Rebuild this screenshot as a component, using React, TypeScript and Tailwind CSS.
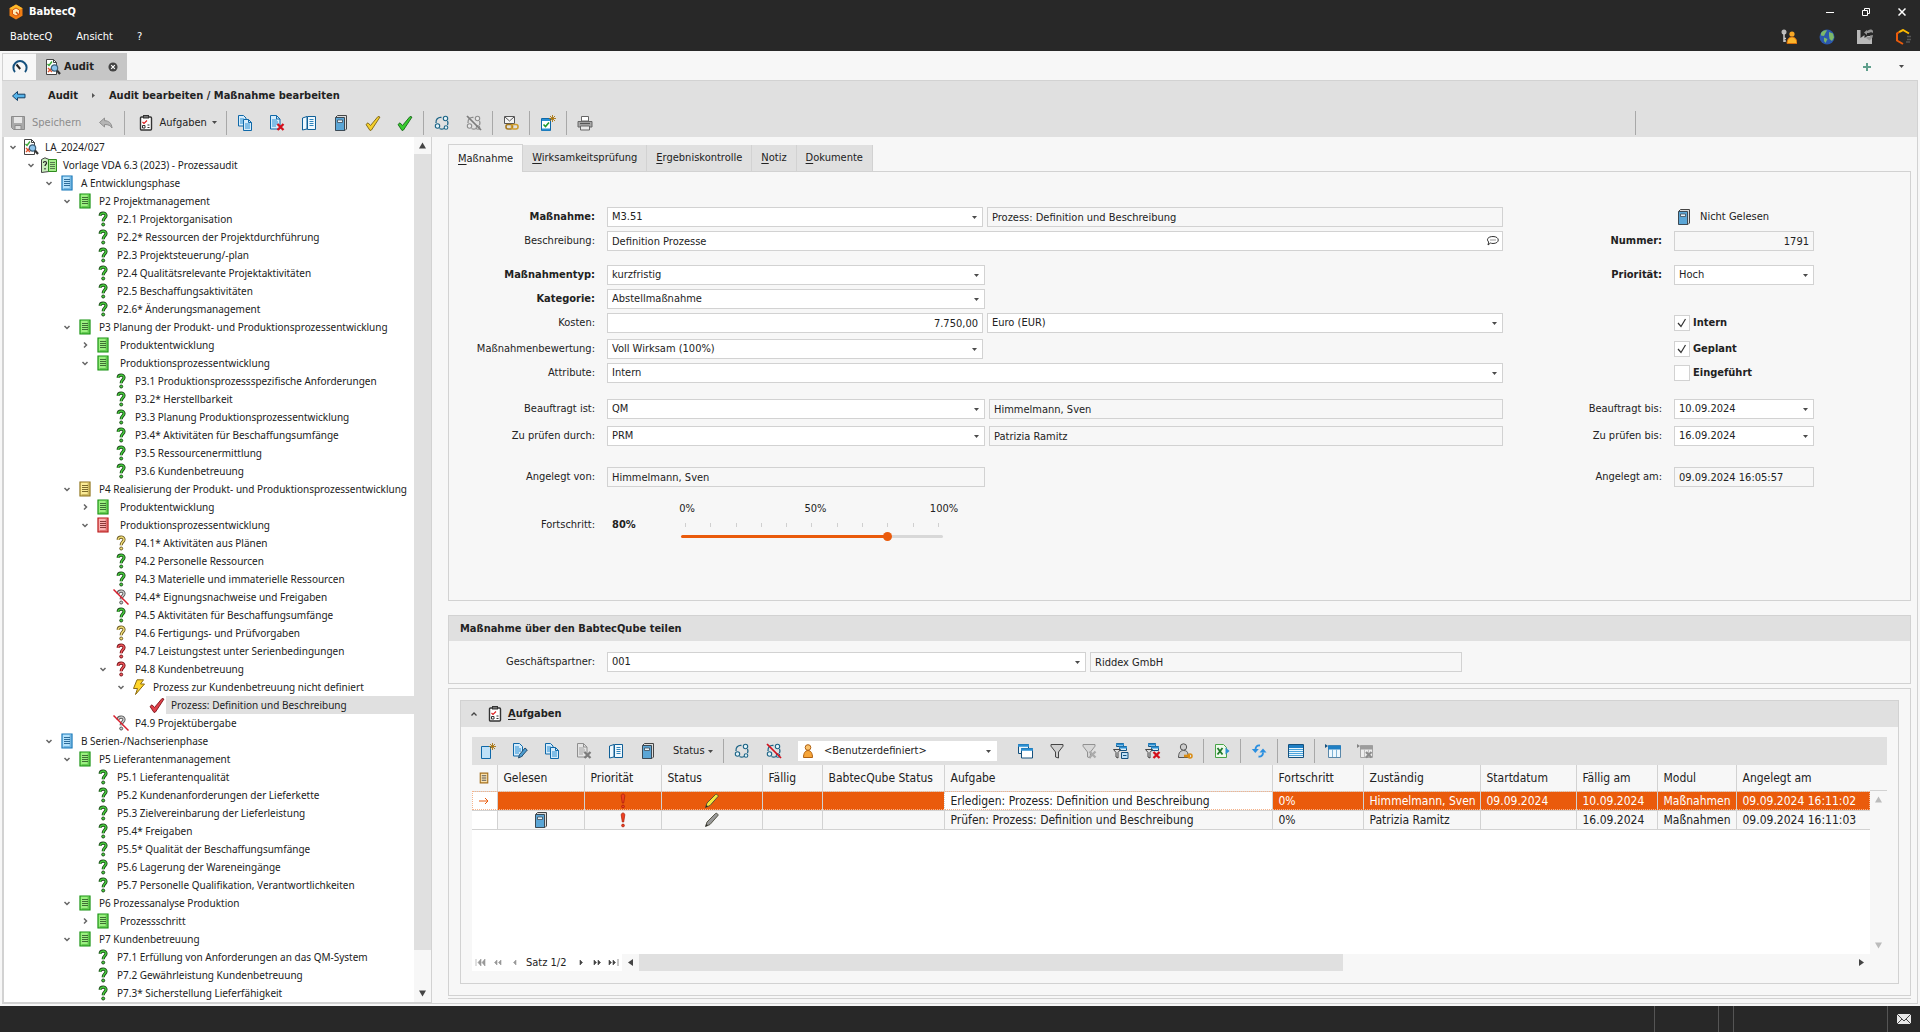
import { ReactNode, useState } from "react";

type IconProps = { className?: string };

function Svg({ children, className = "" }: { children: ReactNode; className?: string }) {
  return (
    <svg viewBox="0 0 16 16" className={`size-4 shrink-0 ${className}`} fill="none" aria-hidden="true">
      {children}
    </svg>
  );
}

function Caret({ className = "" }: IconProps) {
  return (
    <svg viewBox="0 0 5 3" className={`h-[3px] w-[5px] shrink-0 ${className}`} aria-hidden="true">
      <path d="M0 0h5L2.5 3z" fill="#4a4a4a" />
    </svg>
  );
}

function AuditIcon() {
  return (
    <Svg>
      <path d="M1.5.5h7l3 3v12h-10z" fill="#fff" stroke="#444" />
      <path d="M8.5.5v3h3" stroke="#444" />
      <path d="M2.500 5l1.500 1.500L7 2.500" stroke="#3aa935" strokeWidth="1.400" />
      <path d="M3 9l4 4M7 9l-4 4" stroke="#e0522d" strokeWidth="1.400" />
      <circle cx="9.500" cy="9" r="3.200" fill="#8cc4ec" stroke="#3d5f78" strokeWidth="1.200" />
      <path d="M12 11.500l3 3.500" stroke="#333" strokeWidth="2.200" />
    </Svg>
  );
}

function GaugeIcon() {
  return (
    <Svg>
      <path d="M3 13a6.600 6.600 0 1 1 10 0" stroke="#14507d" strokeWidth="2" />
      <path d="M4.500 5.500l3.700 4.500" stroke="#222" strokeWidth="2" />
    </Svg>
  );
}

function BackIcon() {
  return (
    <Svg>
      <path d="M1.500 8l5-4.500v2.700h7.500v3.600H6.500v2.700z" fill="#56b4ea" stroke="#123f66" />
    </Svg>
  );
}

function SaveIcon() {
  return (
    <Svg>
      <path d="M1.500 1.500h13v13h-11l-2-2z" fill="#a9a9a9" stroke="#8b8b8b" />
      <path d="M4 2h8v6H4z" fill="#e6e6e6" />
      <path d="M5 10.500h6v4H5z" fill="#ddd" stroke="#8b8b8b" />
    </Svg>
  );
}

function UndoIcon() {
  return (
    <Svg>
      <path d="M1.500 7.500l5-4.500v2.700c4 0 7 2 7.500 7.300-1.500-2.500-3.500-3.500-7.500-3.500V12z" fill="#b5b5b5" stroke="#8f8f8f" />
    </Svg>
  );
}

function ClipboardIcon() {
  return (
    <Svg>
      <rect x="2.500" y="2" width="11" height="13" rx="1" fill="#fff" stroke="#333" strokeWidth="1.400" />
      <rect x="5.500" y=".5" width="5" height="2.500" fill="#777" stroke="#333" />
      <path d="M4.500 7l1.500 1.500 3-3" stroke="#d22" strokeWidth="1.200" />
      <path d="M4.500 10.500h2.500v2.500h-2.500zM9.500 10h2M9.500 12.500h2" stroke="#333" />
    </Svg>
  );
}

function CopyIcon() {
  return (
    <Svg>
      <path d="M1.500.5h5l2.500 2.500v8H1.500z" fill="#d5ecfb" stroke="#0f68a8" />
      <path d="M3 4h4M3 6h4M3 8h4" stroke="#2a8fd3" />
      <path d="M6.500 4.500h5l3 3v8h-8z" fill="#d5ecfb" stroke="#0f68a8" />
      <path d="M11.500 4.500v3h3" stroke="#0f68a8" />
      <path d="M8 9h5M8 11h5M8 13h5" stroke="#2a8fd3" />
    </Svg>
  );
}

function DeleteDocIcon({ className }: IconProps) {
  return (
    <Svg className={className}>
      <path d="M1.500.5h6l3.500 3.500v10h-9.500z" fill="#d5ecfb" stroke="#0f68a8" />
      <path d="M7.500.5V4H11" stroke="#0f68a8" />
      <path d="M3 5h5M3 7h6M3 9h6M3 11h4" stroke="#2a8fd3" />
      <path d="M8.500 9l6 6M14.500 9l-6 6" stroke="#d3101c" strokeWidth="2.300" />
    </Svg>
  );
}

function OpenBookIcon() {
  return (
    <Svg>
      <path d="M1.500 3L6 1.500V14l-4.500 1z" fill="#eef8fe" stroke="#0f5f97" />
      <path d="M6.500 1.500h8v13h-8z" fill="#eef8fe" stroke="#0f5f97" />
      <path d="M8.500 4.500h4M8.500 6.500h4M8.500 8.500h4M8.500 10.500h4" stroke="#2f83ba" />
    </Svg>
  );
}

function ClosedBookIcon() {
  return (
    <Svg>
      <path d="M4.500.5h9v13.500l-1.500 1.500h-9V2z" fill="#ddd" stroke="#444" />
      <path d="M2.500 2.500h9v13h-9z" fill="#5ba6d6" stroke="#3c4a55" />
      <path d="M4.500 5h5v2.500h-5z" fill="#e8f3fa" stroke="#3c4a55" strokeWidth=".8" />
    </Svg>
  );
}

function CheckIcon({ fill, stroke }: { fill: string; stroke: string }) {
  return (
    <Svg>
      <path d="M1 9.500l2-1.700 2.500 2.700L13 1.500l2 .500-8.500 13-1.500.5z" fill={fill} stroke={stroke} strokeWidth=".9" />
    </Svg>
  );
}

function CycleIcon({ off = false, className = "" }: { off?: boolean; className?: string }) {
  return (
    <Svg className={className}>
      <path d="M2 8C1.500 4.500 4 2 7.500 2.500M5.500 13.500c1.500.8 3 .8 4.500 0M13.500 6c.6 1.300.6 2.700 0 4" stroke="#1c6486" strokeWidth="1.300" />
      <circle cx="11.500" cy="3.500" r="2.200" fill="#e4f4fa" stroke="#1c6486" strokeWidth="1.100" />
      <circle cx="3.500" cy="11" r="2.200" fill="#e4f4fa" stroke="#1c6486" strokeWidth="1.100" />
      <circle cx="12" cy="12.500" r="1.800" fill="#e4f4fa" stroke="#1c6486" strokeWidth="1.100" />
      {off && <path d="M1 1l14 14" stroke="#d3101c" strokeWidth="1.700" />}
    </Svg>
  );
}

function MailLinkIcon() {
  return (
    <Svg>
      <path d="M1.500 1.500h10v7h-10z" fill="#f4f4f4" stroke="#555" />
      <path d="M2 2l4.500 4L11 2" stroke="#555" />
      <rect x="3" y="9.500" width="6.500" height="4.500" rx="2" stroke="#a5781c" strokeWidth="1.600" />
      <rect x="8.500" y="9.500" width="6.500" height="4.500" rx="2" stroke="#cf9d2d" strokeWidth="1.600" />
    </Svg>
  );
}

function Spark() {
  return <path d="M12.500 0v7M9 3.500h7M10 1l5 5M15 1l-5 5" stroke="#a8740e" strokeWidth=".9" />;
}

function NewDocIcon({ checked = false }: { checked?: boolean }) {
  return (
    <Svg>
      <path d="M1.500 3.500h9v12h-9z" fill={checked ? "#fff" : "#bfe1f8"} stroke="#0f68a8" />
      {checked && <path d="M2 5h8M2 14.500h8" stroke="#2a8fd3" strokeWidth="2" />}
      {checked && <path d="M3.500 9.500l2 2L9 7.500" stroke="#1e9a2e" strokeWidth="1.600" />}
      <Spark />
    </Svg>
  );
}

function PrinterIcon() {
  return (
    <Svg>
      <path d="M4.500 1.500h7V6h-7z" fill="#fff" stroke="#666" />
      <path d="M1 6.500h14V12H1z" fill="#a8a8a8" stroke="#666" />
      <path d="M3 8.500h10" stroke="#555" strokeWidth="1.200" />
      <path d="M3.500 11h9v4h-9z" fill="#e9e9e9" stroke="#666" />
    </Svg>
  );
}

function EditDocIcon() {
  return (
    <Svg>
      <path d="M1.500.5h6l3 3v9.500h-9z" fill="#d5ecfb" stroke="#0f68a8" />
      <path d="M3 4h4M3 6h6M3 8h6M3 10h4" stroke="#2a8fd3" />
      <path d="M6.500 15l1-3.500 5.500-6.500 2.300 2-5.600 6.500z" fill="#4d9ccf" stroke="#1d4464" strokeWidth=".9" />
    </Svg>
  );
}

function WindowsIcon() {
  return (
    <Svg>
      <path d="M1.500 1.500h10v9h-10z" fill="#eaf5fc" stroke="#14507d" />
      <path d="M1 2.500h11" stroke="#2a8fd3" strokeWidth="2.500" />
      <path d="M4.500 5.500h11v9.500h-11z" fill="#fff" stroke="#14507d" />
      <path d="M4 6.500h12" stroke="#2a8fd3" strokeWidth="2.500" />
    </Svg>
  );
}

function FunnelIcon({ off = false }: { off?: boolean }) {
  return (
    <Svg className={off ? "opacity-50" : ""}>
      <path d="M2 1.500h12v1.700L9.500 9v6l-3-1V9L2 3.200z" fill="#d0d0d0" stroke="#444" />
      {off && <path d="M8.500 8.500l6 6M14.500 8.500l-6 6" stroke="#777" strokeWidth="2.300" />}
    </Svg>
  );
}

function FunnelBoxIcon({ del = false }: { del?: boolean }) {
  return (
    <Svg>
      <path d="M3.500.5h7v3h-7zM6.500 3.500h7v4h-7z" fill="#d9effb" stroke="#14507d" />
      <path d="M3 1.500h8M6 4.500h8" stroke="#2a8fd3" strokeWidth="2" />
      <path d="M.5 6.500h7L5 9.500v5.500l-2-1V9.500z" fill="#ddd" stroke="#444" />
      {del ? (
        <path d="M8.500 9l6 6M14.500 9l-6 6" stroke="#d3101c" strokeWidth="2.300" />
      ) : (
        <path d="M8.500 9.500h6.500v6H8.500zM10 12.500h3.500" fill="#bfe1f8" stroke="#14507d" />
      )}
    </Svg>
  );
}

function UserToolIcon() {
  return (
    <Svg>
      <circle cx="6.500" cy="4" r="3.200" fill="#ccc" stroke="#555" />
      <path d="M1.500 14.500c0-5 2-7 5-7s4 1 4.500 3.500v3.500z" fill="#ccc" stroke="#555" />
      <path d="M7 13h6" stroke="#d98c14" strokeWidth="2.600" />
      <circle cx="13" cy="13" r="2" stroke="#d98c14" strokeWidth="1.500" />
    </Svg>
  );
}

function ExcelIcon() {
  return (
    <Svg>
      <path d="M1.500 1.500h8l3 3v10h-11z" fill="#eef9ec" stroke="#48a447" />
      <path d="M3.500 5l5 6.500M8.500 5l-5 6.500" stroke="#217a2b" strokeWidth="1.800" />
      <path d="M11.500 4.500L15.500 8l-4 3.500z" fill="#2a8fd3" />
    </Svg>
  );
}

function SyncIcon() {
  return (
    <Svg>
      <path d="M9 2.500C6 2 4.500 4 4.500 6.500" stroke="#2a8fe0" strokeWidth="1.900" />
      <path d="M.8 6h7L4.300 10z" fill="#2a8fe0" />
      <path d="M7.500 13.500c3 .5 4.500-1.500 4.500-4" stroke="#2a8fe0" strokeWidth="1.900" />
      <path d="M8.500 9.500h7L12 5.500z" fill="#2a8fe0" />
    </Svg>
  );
}

function ListIcon() {
  return (
    <Svg>
      <path d="M.5 1.500h15v13H.5z" fill="#e8f6fd" stroke="#14507d" />
      <path d="M1 3.500h14" stroke="#1f7fc4" strokeWidth="3" />
      <path d="M1 6.500h14M1 8.500h14M1 10.500h14M1 12.500h14" stroke="#4aa3dc" />
    </Svg>
  );
}

function GridIcon({ off = false }: { off?: boolean }) {
  return (
    <Svg className={off ? "grayscale opacity-60" : ""}>
      <path d="M0 1l3 2-3 2z" fill="#14507d" />
      <path d="M3.500 2.500h12v12h-12z" fill="#eef8fe" stroke="#5a87a8" />
      <path d="M3 4.500h13" stroke="#1f7fc4" strokeWidth="4" />
      <path d="M7.500 6v8M11.500 6v8" stroke="#7fb4d6" />
      {off && <path d="M9 9l5.500 5.500M14.500 9L9 14.500" stroke="#555" strokeWidth="2.200" />}
    </Svg>
  );
}

function PersonIcon() {
  return (
    <Svg>
      <path d="M3.500 14.500c0-4 1.500-7 4.500-7s4.500 3 4.500 7z" fill="#f6a53a" stroke="#b06010" />
      <circle cx="8" cy="4.500" r="2.800" fill="#fbc36d" stroke="#b06010" />
    </Svg>
  );
}

function PriorityIcon() {
  return (
    <Svg>
      <path d="M6.200 3c0-2.700 3.600-2.700 3.600 0L8.700 10H7.300z" fill="#f0401f" stroke="#a51d0c" strokeWidth=".7" />
      <circle cx="8" cy="13.500" r="1.400" fill="#f0401f" stroke="#a51d0c" strokeWidth=".7" />
    </Svg>
  );
}

function PencilIcon({ fill }: { fill: string }) {
  return (
    <Svg>
      <path d="M1.500 14.500l1.500-4.500L11.500 1.500c1-.8 3 .7 2.500 2L6 12.500z" fill={fill} stroke="#4a4a3a" strokeWidth=".9" />
      <path d="M1.500 14.500l1-2.500 1.500 1.300z" fill="#222" />
    </Svg>
  );
}

function DocIcon({ light, dark, line }: { light: string; dark: string; line: string }) {
  return (
    <Svg>
      <path d="M3 1h10v14H3z" fill={light} stroke={dark} strokeWidth="1.200" />
      <path d="M11.500 2v12h-7" stroke={dark} strokeOpacity=".4" strokeWidth="1.800" />
      <path d="M5 4.500h6M5 6.500h6M5 8.500h6M5 10.500h6" stroke={line} strokeWidth=".9" />
    </Svg>
  );
}

function QuestionIcon({ fill, dark, crossed = false }: { fill: string; dark: string; crossed?: boolean }) {
  const hook = "M5.200 4.800C5.200 1.200 11 1.200 11 4.600 11 7 8.200 6.800 8.200 10.200";
  return (
    <Svg>
      <path d={hook} stroke={dark} strokeWidth="3.200" />
      <path d={hook} stroke={fill} strokeWidth="1.400" />
      <circle cx="8.200" cy="13.500" r="1.500" fill={fill} stroke={dark} />
      {crossed && <path d="M.5.5l15 15" stroke="#d81e2c" strokeWidth="1.500" />}
    </Svg>
  );
}

function CatalogIcon() {
  return (
    <Svg>
      <path d="M.5 2.500L4 .8l4 1.700v12l-7.500 1z" fill="#c9efbd" stroke="#444" />
      <path d="M7.500 2.500h8v12h-8z" fill="#a5ee8c" stroke="#2f8a1e" />
      <path d="M9 5.500h5M9 7.500h5M9 9.500h5M9 11.500h5" stroke="#4e6b48" strokeWidth=".9" />
      <path d="M2.500 6c0-2 3-2 3 0 0 1.500-1.500 1.500-1.500 3M4 11v1.500" stroke="#222" strokeWidth="1.200" />
    </Svg>
  );
}

function BoltIcon() {
  return (
    <Svg>
      <path d="M6 .8h6.500L9.500 5h4L4.500 15.500l2-6H2.500z" fill="#ffd52a" stroke="#8a6a10" />
    </Svg>
  );
}

const nodeIcons = {
  audit: <AuditIcon />,
  catalog: <CatalogIcon />,
  blue: <DocIcon light="#b4e2fc" dark="#1476b8" line="#1d5f8e" />,
  green: <DocIcon light="#9bf080" dark="#179210" line="#33602c" />,
  yellow: <DocIcon light="#fbeb96" dark="#8f741c" line="#6d5c20" />,
  red: <DocIcon light="#fbb0b0" dark="#b81414" line="#7c2a2a" />,
  qGreen: <QuestionIcon fill="#46cf3c" dark="#1e4a1c" />,
  qYellow: <QuestionIcon fill="#f4e07a" dark="#6b5a22" />,
  qRed: <QuestionIcon fill="#f2585c" dark="#75151a" />,
  qOff: <QuestionIcon fill="#ccc" dark="#555" crossed />,
  bolt: <BoltIcon />,
  measure: <CheckIcon fill="#e0414a" stroke="#7c1219" />,
};

type NodeIcon = keyof typeof nodeIcons;

type TreeNode = { level: number; icon: NodeIcon; label: string; open?: boolean; wide?: boolean; selected?: boolean };

const tree: TreeNode[] = [
  { level: 0, icon: "audit", label: "LA_2024/027", open: true },
  { level: 1, icon: "catalog", label: "Vorlage VDA 6.3 (2023) - Prozessaudit", open: true },
  { level: 2, icon: "blue", label: "A Entwicklungsphase", open: true },
  { level: 3, icon: "green", label: "P2 Projektmanagement", open: true },
  { level: 4, icon: "qGreen", label: "P2.1 Projektorganisation" },
  { level: 4, icon: "qGreen", label: "P2.2* Ressourcen der Projektdurchführung" },
  { level: 4, icon: "qGreen", label: "P2.3 Projektsteuerung/-plan" },
  { level: 4, icon: "qGreen", label: "P2.4 Qualitätsrelevante Projektaktivitäten" },
  { level: 4, icon: "qGreen", label: "P2.5 Beschaffungsaktivitäten" },
  { level: 4, icon: "qGreen", label: "P2.6* Änderungsmanagement" },
  { level: 3, icon: "green", label: "P3 Planung der Produkt- und Produktionsprozessentwicklung", open: true },
  { level: 4, icon: "green", label: "Produktentwicklung", open: false, wide: true },
  { level: 4, icon: "green", label: "Produktionsprozessentwicklung", open: true, wide: true },
  { level: 5, icon: "qGreen", label: "P3.1 Produktionsprozessspezifische Anforderungen" },
  { level: 5, icon: "qGreen", label: "P3.2* Herstellbarkeit" },
  { level: 5, icon: "qGreen", label: "P3.3 Planung Produktionsprozessentwicklung" },
  { level: 5, icon: "qGreen", label: "P3.4* Aktivitäten für Beschaffungsumfänge" },
  { level: 5, icon: "qGreen", label: "P3.5 Ressourcenermittlung" },
  { level: 5, icon: "qGreen", label: "P3.6 Kundenbetreuung" },
  { level: 3, icon: "yellow", label: "P4 Realisierung der Produkt- und Produktionsprozessentwicklung", open: true },
  { level: 4, icon: "green", label: "Produktentwicklung", open: false, wide: true },
  { level: 4, icon: "red", label: "Produktionsprozessentwicklung", open: true, wide: true },
  { level: 5, icon: "qYellow", label: "P4.1* Aktivitäten aus Plänen" },
  { level: 5, icon: "qGreen", label: "P4.2 Personelle Ressourcen" },
  { level: 5, icon: "qGreen", label: "P4.3 Materielle und immaterielle Ressourcen" },
  { level: 5, icon: "qOff", label: "P4.4* Eignungsnachweise und Freigaben" },
  { level: 5, icon: "qGreen", label: "P4.5 Aktivitäten für Beschaffungsumfänge" },
  { level: 5, icon: "qYellow", label: "P4.6 Fertigungs- und Prüfvorgaben" },
  { level: 5, icon: "qRed", label: "P4.7 Leistungstest unter Serienbedingungen" },
  { level: 5, icon: "qRed", label: "P4.8 Kundenbetreuung", open: true },
  { level: 6, icon: "bolt", label: "Prozess zur Kundenbetreuung nicht definiert", open: true },
  { level: 7, icon: "measure", label: "Prozess: Definition und Beschreibung", selected: true },
  { level: 5, icon: "qOff", label: "P4.9 Projektübergabe" },
  { level: 2, icon: "blue", label: "B Serien-/Nachserienphase", open: true },
  { level: 3, icon: "green", label: "P5 Lieferantenmanagement", open: true },
  { level: 4, icon: "qGreen", label: "P5.1 Lieferantenqualität" },
  { level: 4, icon: "qGreen", label: "P5.2 Kundenanforderungen der Lieferkette" },
  { level: 4, icon: "qGreen", label: "P5.3 Zielvereinbarung der Lieferleistung" },
  { level: 4, icon: "qGreen", label: "P5.4* Freigaben" },
  { level: 4, icon: "qGreen", label: "P5.5* Qualität der Beschaffungsumfänge" },
  { level: 4, icon: "qGreen", label: "P5.6 Lagerung der Wareneingänge" },
  { level: 4, icon: "qGreen", label: "P5.7 Personelle Qualifikation, Verantwortlichkeiten" },
  { level: 3, icon: "green", label: "P6 Prozessanalyse Produktion", open: true },
  { level: 4, icon: "green", label: "Prozessschritt", open: false, wide: true },
  { level: 3, icon: "green", label: "P7 Kundenbetreuung", open: true },
  { level: 4, icon: "qGreen", label: "P7.1 Erfüllung von Anforderungen an das QM-System" },
  { level: 4, icon: "qGreen", label: "P7.2 Gewährleistung Kundenbetreuung" },
  { level: 4, icon: "qGreen", label: "P7.3* Sicherstellung Lieferfähigkeit" },
];

function TreeRow({ node }: { node: TreeNode }) {
  return (
    <li className="flex h-[18px] items-center" style={{ paddingLeft: node.level * 18 }}>
      {node.open === undefined ? (
        <span className="w-[18px] shrink-0" />
      ) : (
        <button className="flex w-[18px] shrink-0 justify-center" aria-label={node.open ? "Zuklappen" : "Aufklappen"}>
          <svg viewBox="0 0 8 8" className="size-2" fill="none" stroke="#666" strokeWidth="1.500">
            <path d={node.open ? "M1.500 3L4 5.500 6.500 3" : "M3 1.500L5.500 4 3 6.500"} />
          </svg>
        </button>
      )}
      <span className="flex w-[18px] shrink-0 justify-center">{nodeIcons[node.icon]}</span>
      <button
        className={`h-full flex-1 overflow-hidden text-left whitespace-nowrap ${node.wide ? "pl-2" : "pl-[5px]"} ${
          node.selected ? "bg-[#e0e0e0]" : ""
        }`}
      >
        {node.label}
      </button>
    </li>
  );
}

function ScrollArrow({ dir, light = false }: { dir: "up" | "down" | "left" | "right"; light?: boolean }) {
  const paths = { up: "M0 6.500L3.500.5 7 6.500z", down: "M0 .5h7L3.500 6.500z", left: "M6 0v7L1 3.500z", right: "M1 0l5 3.500L1 7z" };
  return (
    <button className="flex size-[17px] shrink-0 items-center justify-center" aria-label={`Scroll ${dir}`}>
      <svg viewBox="0 0 7 7" className="size-[7px]">
        <path d={paths[dir]} fill={light ? "#bbb" : "#444"} />
      </svg>
    </button>
  );
}

function Tool({ label, children, disabled = false }: { label: string; children: ReactNode; disabled?: boolean }) {
  return (
    <button title={label} aria-label={label} disabled={disabled} className="flex h-6 w-8 shrink-0 items-center justify-center">
      {children}
    </button>
  );
}

function Divider() {
  return <span className="mx-[2px] h-6 w-px shrink-0 bg-[#a8a8a8]" />;
}

const box = "h-5 w-full min-w-0 border border-[#d2d2d2] px-1 leading-4 text-[#222] outline-none";

type TextProps = { id?: string; value: string; readOnly?: boolean; right?: boolean; label?: string };

function Text({ id, value, readOnly = false, right = false, label }: TextProps) {
  return (
    <input
      id={id}
      aria-label={label}
      defaultValue={value}
      readOnly={readOnly}
      className={`${box} ${readOnly ? "bg-[#f7f7f7]" : "bg-white"} ${right ? "text-right" : ""}`}
    />
  );
}

function Select({ id, value, label }: { id?: string; value: string; label?: string }) {
  return (
    <span className="relative block w-full min-w-0">
      <select id={id} aria-label={label} defaultValue={value} className={`${box} block appearance-none bg-white`}>
        <option>{value}</option>
      </select>
      <Caret className="pointer-events-none absolute top-[9px] right-[6px]" />
    </span>
  );
}

type RowProps = {
  id: string;
  label: string;
  bold?: boolean;
  children: ReactNode;
  sideId?: string;
  side?: string;
  sideBold?: boolean;
  sideField?: ReactNode;
  className?: string;
};

function Row({ id, label, bold, children, side, sideId, sideBold, sideField, className = "" }: RowProps) {
  return (
    <div className={`flex items-center ${className}`}>
      <label htmlFor={id} className={`w-[146px] shrink-0 text-right ${bold ? "font-bold" : ""}`}>
        {label}
      </label>
      <div className="ml-3 min-w-0 flex-1">{children}</div>
      {side ? (
        <label htmlFor={sideId} className={`w-[159px] shrink-0 text-right ${sideBold ? "font-bold" : ""}`}>
          {side}
        </label>
      ) : (
        <span className="w-[159px] shrink-0" />
      )}
      <div className="ml-3 w-[140px] shrink-0">{sideField}</div>
    </div>
  );
}

function Pair({ children, wide = false }: { children: ReactNode; wide?: boolean }) {
  return <div className={`grid gap-1 ${wide ? "grid-cols-[378fr_514fr]" : "grid-cols-[376fr_516fr]"}`}>{children}</div>;
}

function Check({ label, defaultChecked }: { label: string; defaultChecked?: boolean }) {
  const [on, setOn] = useState(!!defaultChecked);
  return (
    <label className="flex items-center gap-[3px] font-bold">
      <span className="relative flex size-4">
        <input
          type="checkbox"
          checked={on}
          onChange={() => setOn(!on)}
          className="size-4 appearance-none border border-[#d2d2d2] bg-white"
        />
        {on && (
          <svg viewBox="0 0 16 16" className="pointer-events-none absolute inset-0" fill="none">
            <path d="M4 8l3 3.500L11.500 4" stroke="#333" strokeWidth="1.200" />
          </svg>
        )}
      </span>
      {label}
    </label>
  );
}

function Progress() {
  const [value, setValue] = useState(80);
  return (
    <div className="flex items-center">
      <output htmlFor="fortschritt" className="w-[74px] pl-[5px] font-bold">
        {value}%
      </output>
      <div className="-mt-[10px] flex w-[262px] flex-col">
        <div className="-mr-[17px] -ml-[10px] flex justify-between">
          <span className="w-8 text-center">0%</span>
          <span className="w-8 text-center">50%</span>
          <span className="w-8 text-center">100%</span>
        </div>
        <div className="mx-1 mt-[6px] flex h-1 justify-between">
          {Array.from({ length: 11 }, (_, i) => (
            <span key={i} className="w-px bg-[#d0d0d0]" />
          ))}
        </div>
        <input
          id="fortschritt"
          type="range"
          value={value}
          onChange={(e) => setValue(Number(e.target.value))}
          className="mt-2 h-[3px] w-full appearance-none rounded-full [&::-webkit-slider-thumb]:size-[9px] [&::-webkit-slider-thumb]:appearance-none [&::-webkit-slider-thumb]:rounded-full [&::-webkit-slider-thumb]:bg-[#ea5b0c]"
          style={{ background: `linear-gradient(to right, #ea5b0c ${value}%, #d8d8d8 ${value}%)` }}
        />
      </div>
    </div>
  );
}

const tabs = ["Maßnahme", "Wirksamkeitsprüfung", "Ergebniskontrolle", "Notiz", "Dokumente"];

function MeasurePanel() {
  return (
    <section>
      <div role="tablist" className="flex h-[27px] items-end">
        {tabs.map((tab, i) => (
          <button
            key={tab}
            role="tab"
            aria-selected={i === 0}
            className={
              i === 0
                ? "relative z-10 -mb-px h-7 border border-b-0 border-[#d2d2d2] bg-[#f7f7f7] px-[9px]"
                : "h-[26px] border-r border-[#d2d2d2] bg-[#e0e0e0] px-[9px]"
            }
          >
            <span className="underline underline-offset-2">{tab[0]}</span>
            {tab.slice(1)}
          </button>
        ))}
      </div>
      <div className="border border-[#d2d2d2] pt-[35px] pr-24 pb-[62px]">
        <Row
          id="massnahme"
          label="Maßnahme:"
          bold
          sideField={
            <span className="flex items-center gap-2 pl-[2px]">
              <ClosedBookIcon />
              Nicht Gelesen
            </span>
          }
        >
          <Pair>
            <Select id="massnahme" value="M3.51" />
            <Text value="Prozess: Definition und Beschreibung" label="Maßnahme Text" readOnly />
          </Pair>
        </Row>
        <Row
          id="beschreibung"
          label="Beschreibung:"
          className="mt-1"
          sideId="nummer"
          side="Nummer:"
          sideBold
          sideField={<Text id="nummer" value="1791" readOnly right />}
        >
          <div className="relative">
            <Text id="beschreibung" value="Definition Prozesse" />
            <button className="absolute top-1 right-[3px]" aria-label="Kommentar">
              <svg viewBox="0 0 14 12" className="h-3 w-[14px]" fill="none" stroke="#333">
                <path d="M7 1.500c7 0 7 7 0 7-1 0-2-.2-2.500-.5L2 10l.7-3C0 4.500 2 1.500 7 1.500z" />
                <path d="M4.500 5h5" strokeDasharray="1 1" />
              </svg>
            </button>
          </div>
        </Row>
        <Row
          id="typ"
          label="Maßnahmentyp:"
          bold
          className="mt-[14px]"
          sideId="prio"
          side="Priorität:"
          sideBold
          sideField={<Select id="prio" value="Hoch" />}
        >
          <Pair wide>
            <Select id="typ" value="kurzfristig" />
          </Pair>
        </Row>
        <Row id="kategorie" label="Kategorie:" bold className="mt-1">
          <Pair wide>
            <Select id="kategorie" value="Abstellmaßnahme" />
          </Pair>
        </Row>
        <Row id="kosten" label="Kosten:" className="mt-1" sideField={<Check label="Intern" defaultChecked />}>
          <Pair>
            <Text id="kosten" value="7.750,00" right />
            <Select value="Euro (EUR)" label="Währung" />
          </Pair>
        </Row>
        <Row id="bewertung" label="Maßnahmenbewertung:" className="mt-[6px]" sideField={<Check label="Geplant" defaultChecked />}>
          <Pair>
            <Select id="bewertung" value="Voll Wirksam (100%)" />
          </Pair>
        </Row>
        <Row id="attribute" label="Attribute:" className="mt-1" sideField={<Check label="Eingeführt" />}>
          <Select id="attribute" value="Intern" />
        </Row>
        <Row
          id="beauftragt"
          label="Beauftragt ist:"
          className="mt-4"
          sideId="beauftragt-bis"
          side="Beauftragt bis:"
          sideField={<Select id="beauftragt-bis" value="10.09.2024" />}
        >
          <Pair wide>
            <Select id="beauftragt" value="QM" />
            <Text value="Himmelmann, Sven" label="Beauftragter" readOnly />
          </Pair>
        </Row>
        <Row
          id="pruefer"
          label="Zu prüfen durch:"
          className="mt-[7px]"
          sideId="pruefen-bis"
          side="Zu prüfen bis:"
          sideField={<Select id="pruefen-bis" value="16.09.2024" />}
        >
          <Pair wide>
            <Select id="pruefer" value="PRM" />
            <Text value="Patrizia Ramitz" label="Prüfer" readOnly />
          </Pair>
        </Row>
        <Row
          id="angelegt"
          label="Angelegt von:"
          className="mt-[21px]"
          sideId="angelegt-am"
          side="Angelegt am:"
          sideField={<Text id="angelegt-am" value="09.09.2024 16:05:57" readOnly />}
        >
          <Pair wide>
            <Text id="angelegt" value="Himmelmann, Sven" readOnly />
          </Pair>
        </Row>
        <Row id="fortschritt" label="Fortschritt:" className="mt-6">
          <Progress />
        </Row>
      </div>
    </section>
  );
}

const columns = [
  { name: "Gelesen", width: "w-[87px]" },
  { name: "Priorität", width: "w-[77px]" },
  { name: "Status", width: "w-[101px]" },
  { name: "Fällig", width: "w-[60px]" },
  { name: "BabtecQube Status", width: "w-[122px]" },
  { name: "Aufgabe", width: "" },
  { name: "Fortschritt", width: "w-[91px]" },
  { name: "Zuständig", width: "w-[117px]" },
  { name: "Startdatum", width: "w-[96px]" },
  { name: "Fällig am", width: "w-[81px]" },
  { name: "Modul", width: "w-[79px]" },
  { name: "Angelegt am", width: "w-[134px]" },
];

type Task = { icons: ReactNode[]; cells: string[]; active?: boolean };

const tasks: Task[] = [
  {
    icons: [null, <PriorityIcon />, <PencilIcon fill="#f2e63c" />],
    cells: ["", "", "Erledigen: Prozess: Definition und Beschreibung", "0%", "Himmelmann, Sven", "09.09.2024", "10.09.2024", "Maßnahmen", "09.09.2024 16:11:02"],
    active: true,
  },
  {
    icons: [<ClosedBookIcon />, <PriorityIcon />, <PencilIcon fill="#999" />],
    cells: ["", "", "Prüfen: Prozess: Definition und Beschreibung", "0%", "Patrizia Ramitz", "", "16.09.2024", "Maßnahmen", "09.09.2024 16:11:03"],
  },
];

function TaskTable() {
  return (
    <table className="w-full table-fixed border-collapse bg-white text-xs leading-4 whitespace-nowrap">
      <thead>
        <tr className="h-[26px] border-b border-[#d2d2d2] bg-[#f7f7f7] text-left">
          <th className="w-[25px]">
            <svg viewBox="0 0 16 16" className="mx-auto size-3" fill="none" aria-hidden="true">
              <path d="M3 1.500h10v13H3z" fill="#fbe3b0" stroke="#a5701c" strokeWidth="1.500" />
              <path d="M5 5h6M5 8h6M5 11h6" stroke="#555" strokeWidth="1.400" />
            </svg>
          </th>
          {columns.map((c) => (
            <th key={c.name} className={`border-l border-[#d2d2d2] px-[6px] font-normal ${c.width}`}>
              {c.name}
            </th>
          ))}
        </tr>
      </thead>
      <tbody>
        {tasks.map((task, r) => (
          <tr
            key={r}
            className={`h-[19px] border-b border-[#d2d2d2] ${
              task.active ? "bg-[#ea5b0c] text-white outline-1 -outline-offset-1 outline-dotted outline-[#f6b48c]" : "bg-[#f7f7f7]"
            }`}
          >
            <td className="bg-white text-center leading-none text-[#ea5b0c]">
              {task.active && (
                <svg viewBox="0 0 10 8" className="mx-auto h-2 w-[10px]" fill="none" stroke="#ea5b0c">
                  <path d="M0 4h9M6 1l3 3-3 3" />
                </svg>
              )}
            </td>
            {task.icons.map((icon, i) => (
              <td key={i} className="border-l border-[#d2d2d2]">
                <span className="flex h-4 items-center justify-center">{icon}</span>
              </td>
            ))}
            {task.cells.map((cell, i) => (
              <td
                key={i}
                className={`overflow-hidden border-l border-[#d2d2d2] px-[6px] ${
                  task.active && i === 2 ? "border-y border-y-[#ea5b0c] border-dotted bg-white text-[#222]" : ""
                }`}
              >
                {cell}
              </td>
            ))}
          </tr>
        ))}
      </tbody>
    </table>
  );
}

const nav = {
  first: "M1 0v7M6 0v7L3 3.500zM10 0v7L7 3.500z",
  prevPage: "M5 1v5L2.500 3.500zM9 1v5L6.500 3.500z",
  prev: "M7 1v5L4.500 3.500z",
  next: "M4 1v5l2.500-2.500z",
  nextPage: "M2 1v5l2.500-2.500zM6 1v5l2.500-2.500z",
  last: "M1 1v5l2.500-2.500zM5 1v5l2.500-2.500zM10 0v7",
};

function Nav({ kind, light }: { kind: keyof typeof nav; light?: boolean }) {
  return (
    <button aria-label={kind} className={`flex h-4 items-center justify-center ${light ? "w-[17px]" : "w-4"}`}>
      <svg viewBox="0 0 11 7" className="h-[7px] w-[11px]" fill={light ? "#999" : "#444"} stroke={light ? "#999" : "#444"} strokeWidth=".6">
        <path d={nav[kind]} />
      </svg>
    </button>
  );
}

function TaskToolbar() {
  return (
    <div className="flex h-7 items-center overflow-hidden bg-[#e0e0e0]">
      <Tool label="Neu"><NewDocIcon /></Tool>
      <Tool label="Bearbeiten"><EditDocIcon /></Tool>
      <Tool label="Kopieren"><CopyIcon /></Tool>
      <Tool label="Löschen" disabled><DeleteDocIcon className="grayscale opacity-60" /></Tool>
      <Tool label="Gelesen"><OpenBookIcon /></Tool>
      <Tool label="Nicht gelesen"><ClosedBookIcon /></Tool>
      <button className="ml-[9px] flex w-12 items-center gap-[3px]">
        Status <Caret />
      </button>
      <Divider />
      <Tool label="Verknüpfen"><CycleIcon /></Tool>
      <Tool label="Verknüpfung lösen"><CycleIcon off /></Tool>
      <div className="relative mx-2 flex h-5 w-[199px] shrink-0 items-center bg-white pl-[2px]">
        <PersonIcon />
        <select aria-label="Ansicht" className="h-5 w-full appearance-none pl-2 outline-none">
          <option>&lt;Benutzerdefiniert&gt;</option>
        </select>
        <Caret className="pointer-events-none absolute right-[6px]" />
      </div>
      <span className="w-1" />
      <Tool label="Fenster"><WindowsIcon /></Tool>
      <Tool label="Filter"><FunnelIcon /></Tool>
      <Tool label="Filter entfernen" disabled><FunnelIcon off /></Tool>
      <Tool label="Filter speichern"><FunnelBoxIcon /></Tool>
      <Tool label="Filter löschen"><FunnelBoxIcon del /></Tool>
      <Tool label="Benutzer"><UserToolIcon /></Tool>
      <Divider />
      <Tool label="Excel"><ExcelIcon /></Tool>
      <Divider />
      <Tool label="Aktualisieren"><SyncIcon /></Tool>
      <Divider />
      <Tool label="Liste"><ListIcon /></Tool>
      <Divider />
      <Tool label="Layout laden"><GridIcon /></Tool>
      <Tool label="Layout löschen" disabled><GridIcon off /></Tool>
    </div>
  );
}

function TaskPanel() {
  return (
    <section className="mt-1 flex flex-1 flex-col border border-[#d2d2d2] p-[11px]">
      <div className="flex flex-1 flex-col border border-[#d2d2d2]">
        <h2 className="flex h-[26px] items-center bg-[#e0e0e0] font-bold">
          <button className="flex w-[26px] justify-center" aria-label="Einklappen">
            <svg viewBox="0 0 6 4" className="h-1 w-[6px]" fill="none" stroke="#444" strokeWidth="1.300">
              <path d="M.5 3.500L3 1l2.500 2.500" />
            </svg>
          </button>
          <span className="mr-[5px]"><ClipboardIcon /></span>
          <span>
            <span className="underline underline-offset-2">A</span>ufgaben
          </span>
        </h2>
        <div className="flex flex-1 flex-col px-[11px] pt-[10px] pb-3">
          <TaskToolbar />
          <div className="flex flex-1">
            <div className="min-w-0 flex-1 bg-white">
              <TaskTable />
            </div>
            <div className="flex w-[17px] flex-col justify-between">
              <div className="border-b border-[#d2d2d2] pt-[25px]" />
              <ScrollArrow dir="up" light />
              <span className="flex-1" />
              <ScrollArrow dir="down" light />
            </div>
          </div>
          <div className="flex h-[17px] items-center pr-[17px]">
            <div className="flex h-full items-center bg-white">
              <Nav kind="first" light />
              <Nav kind="prevPage" light />
              <Nav kind="prev" light />
              <span className="pr-[7px] pl-[3px]">Satz 1/2</span>
              <Nav kind="next" />
              <Nav kind="nextPage" />
              <Nav kind="last" />
            </div>
            <ScrollArrow dir="left" />
            <div className="h-full flex-1">
              <div className="h-full w-[58%] bg-[#e0e0e0]" />
            </div>
            <ScrollArrow dir="right" />
          </div>
        </div>
      </div>
    </section>
  );
}

function SharePanel() {
  return (
    <section className="mt-[14px] border border-[#d2d2d2]">
      <h2 className="flex h-[25px] items-center bg-[#e0e0e0] px-[11px] font-bold">Maßnahme über den BabtecQube teilen</h2>
      <div className="flex items-center pt-[11px] pr-[448px] pb-[11px]">
        <label htmlFor="partner" className="w-[146px] shrink-0 text-right">
          Geschäftspartner:
        </label>
        <div className="ml-3 grid flex-1 grid-cols-[479fr_372fr] gap-1">
          <Select id="partner" value="001" />
          <Text value="Riddex GmbH" label="Firma" readOnly />
        </div>
      </div>
    </section>
  );
}

function TitleBar() {
  return (
    <header className="h-[51px] bg-[#282828] text-white">
      <div className="flex h-6 items-center pl-2">
        <Svg>
          <path d="M8 .5l6.500 3.700v7.600L8 15.500l-6.500-3.700V4.200z" fill="#f07d13" />
          <path d="M8 .5l6.500 3.700L8 8 1.500 4.200z" fill="#fdb92a" />
          <path d="M8 4l3.500 2v4L8 12l-3.500-2V6z" fill="#fde9b8" stroke="#d4520c" />
          <path d="M8 8l3 3" stroke="#d4520c" strokeWidth="1.500" />
        </Svg>
        <span className="ml-[5px] font-bold">BabtecQ</span>
        <div className="ml-auto flex">
          <button className="flex h-6 w-9 items-center justify-center" aria-label="Minimieren">
            <svg viewBox="0 0 8 8" className="size-2"><path d="M0 4.500h8" stroke="#fff" /></svg>
          </button>
          <button className="flex h-6 w-9 items-center justify-center" aria-label="Wiederherstellen">
            <svg viewBox="0 0 8 8" className="size-2" fill="none" stroke="#fff"><path d="M.5 2.500h5v5h-5zM2.500 2.500v-2h5v5h-2" /></svg>
          </button>
          <button className="flex h-6 w-9 items-center justify-center" aria-label="Schließen">
            <svg viewBox="0 0 8 8" className="size-2" stroke="#fff" strokeWidth="1.500"><path d="M.5.5l7 7M7.500.5l-7 7" /></svg>
          </button>
        </div>
      </div>
      <div className="flex h-[26px] items-center pl-[10px]">
        <nav className="flex gap-6">
          <button>BabtecQ</button>
          <button>Ansicht</button>
          <button>?</button>
        </nav>
        <div className="ml-auto flex gap-[22px] pr-[9px]">
          <button aria-label="Benutzer">
            <Svg>
              <circle cx="3" cy="3" r="2.500" fill="#bbb" />
              <path d="M3 4v9M3 12h2M3 9.500h2" stroke="#ccc" strokeWidth="1.500" />
              <circle cx="11" cy="5" r="2.600" fill="#f9a825" />
              <path d="M6 14.500c0-4 2-6.500 5-6.500s5 2.500 5 6.500z" fill="#fbb52b" stroke="#d56e0c" />
            </Svg>
          </button>
          <button aria-label="Sprache">
            <Svg>
              <circle cx="8" cy="8" r="7.500" fill="#2b58ad" />
              <path d="M2 4c2-3 5-3 6-2.500L6.500 4 5 7 2 6.500zM5 8.500l3.500 1.500L6.500 14 5 12zM10 3l4 1.500 1 4-2 3.500-2.500-2-.5-3.500z" fill="#7cb868" />
            </Svg>
          </button>
          <button aria-label="Werk">
            <Svg>
              <path d="M0 1h3.500v8l4-3v3l3-2h4.500v8H0z" fill="#b9b9b9" />
              <path d="M7 3.500L10 1v1c3-2 5-2 6 0v2c-1-1-3-1-4 0h-2v2zM16 6l-3 .500v1.500h-3l-1 1 3.500 2.500 3-3z" fill="#949494" />
            </Svg>
          </button>
          <button aria-label="Qube">
            <Svg>
              <path d="M14 4.500L8 1 4 3.200" stroke="#fbb900" strokeWidth="2" />
              <path d="M4 3.200L2 4.500v7L8 15" stroke="#ea5b0c" strokeWidth="2" />
              <path d="M12 7.500h4M12 10.500h4M11 13h4" stroke="#555" strokeWidth="1.600" />
            </Svg>
          </button>
        </div>
      </div>
    </header>
  );
}

function MainToolbar() {
  return (
    <div className="flex h-[29px] items-center">
      <button disabled className="ml-2 flex items-center gap-[6px] text-[#8c8c8c]">
        <SaveIcon /> Speichern
      </button>
      <span className="w-[9px]" />
      <Tool label="Rückgängig" disabled><UndoIcon /></Tool>
      <Divider />
      <button className="mr-[7px] ml-[11px] flex items-center gap-[5px]">
        <ClipboardIcon /> Aufgaben <Caret />
      </button>
      <Divider />
      <Tool label="Kopieren"><CopyIcon /></Tool>
      <Tool label="Löschen"><DeleteDocIcon /></Tool>
      <Tool label="Gelesen"><OpenBookIcon /></Tool>
      <Tool label="Nicht gelesen"><ClosedBookIcon /></Tool>
      <Tool label="Geprüft"><CheckIcon fill="#f4cf2c" stroke="#7c6312" /></Tool>
      <Tool label="Freigegeben"><CheckIcon fill="#38cc2f" stroke="#17661a" /></Tool>
      <Divider />
      <Tool label="Verknüpfen"><CycleIcon /></Tool>
      <Tool label="Verknüpfung lösen" disabled><CycleIcon off className="grayscale opacity-60" /></Tool>
      <Divider />
      <Tool label="Mail"><MailLinkIcon /></Tool>
      <Divider />
      <Tool label="Neue Maßnahme"><NewDocIcon checked /></Tool>
      <Divider />
      <Tool label="Drucken"><PrinterIcon /></Tool>
      <span className="mr-[281px] ml-auto h-6 w-px bg-[#a8a8a8]" />
    </div>
  );
}

export default function App() {
  return (
    <div className="flex min-h-screen flex-col bg-[#f7f7f7] font-['DejaVu_Sans_Condensed','DejaVu_Sans',sans-serif] text-[11px] leading-4 text-[#222]">
      <TitleBar />

      <div className="flex h-[29px] items-end pl-[2px]">
        <button className="flex h-[27px] w-[34px] items-center justify-center border-t border-l border-[#d2d2d2]" aria-label="Cockpit">
          <GaugeIcon />
        </button>
        <div className="flex h-[27px] w-[91px] items-center justify-between bg-[#c6c6c6] pr-[9px] pl-[9px]">
          <button className="flex items-center gap-[3px] font-bold">
            <AuditIcon /> Audit
          </button>
          <button aria-label="Tab schließen">
            <svg viewBox="0 0 11 11" className="size-[10px]">
              <circle cx="5.500" cy="5.500" r="5" fill="#444" />
              <path d="M3.500 3.500l4 4M7.500 3.500l-4 4" stroke="#fff" strokeWidth="1.300" />
            </svg>
          </button>
        </div>
        <div className="mr-4 ml-auto flex h-[27px] items-center gap-[28px]">
          <button aria-label="Neuer Tab">
            <svg viewBox="0 0 8 8" className="size-2" stroke="#5f9f8c" strokeWidth="2"><path d="M4 0v8M0 4h8" /></svg>
          </button>
          <button aria-label="Alle Tabs"><Caret /></button>
        </div>
      </div>

      <div className="mr-[2px] ml-[2px] flex flex-1 flex-col border-r border-[#d2d2d2]">
        <div className="h-[57px] border-t border-[#d2d2d2] bg-[#e0e0e0]">
          <nav className="flex h-[27px] items-center pt-[2px] pl-[9px] font-bold">
            <a href="#zurueck" aria-label="Zurück"><BackIcon /></a>
            <a href="#audit" className="ml-[21px]">Audit</a>
            <svg viewBox="0 0 3 5" className="mx-[14px] h-[5px] w-[3px]"><path d="M0 0l3 2.500L0 5z" fill="#555" /></svg>
            <span>Audit bearbeiten / Maßnahme bearbeiten</span>
          </nav>
          <MainToolbar />
        </div>

        <div className="flex flex-1 border-b border-[#d2d2d2]">
          <aside className="flex w-[430px] shrink-0 border-r border-b border-l-2 border-[#d2d2d2] bg-white">
            <ul className="min-w-0 flex-1 overflow-hidden pt-px font-['Noto_Sans',sans-serif] text-[10px]">
              {tree.map((node, i) => (
                <TreeRow key={i} node={node} />
              ))}
            </ul>
            <div className="flex w-[17px] flex-col bg-[#f7f7f7]">
              <ScrollArrow dir="up" />
              <div className="h-[796px] bg-[#e0e0e0]" />
              <span className="flex-1" />
              <ScrollArrow dir="down" />
            </div>
          </aside>

          <main className="flex min-w-0 flex-1 flex-col pt-[7px] pr-[6px] pl-4">
            <MeasurePanel />
            <SharePanel />
            <TaskPanel />
            <div className="mt-[2px] mb-1 h-px bg-[#d2d2d2]" />
          </main>
        </div>
      </div>

      <footer className="mt-[2px] flex h-[26px] items-center justify-end bg-[#282828]">
        <span className="h-full w-[64px] border-l border-[#555]" />
        <span className="h-full w-[15px] border-l border-[#555]" />
        <span className="h-full w-[154px] border-l border-[#555]" />
        <button className="flex h-full w-[33px] items-center justify-center border-l border-[#555]" aria-label="Nachrichten">
          <svg viewBox="0 0 14 10" className="h-[10px] w-[14px]">
            <path d="M0 0h14v10H0z" fill="#e8e8e8" />
            <path d="M0 0l7 7 7-7M0 10l5-5M14 10L9 5" fill="none" stroke="#444" />
          </svg>
        </button>
      </footer>
    </div>
  );
}
